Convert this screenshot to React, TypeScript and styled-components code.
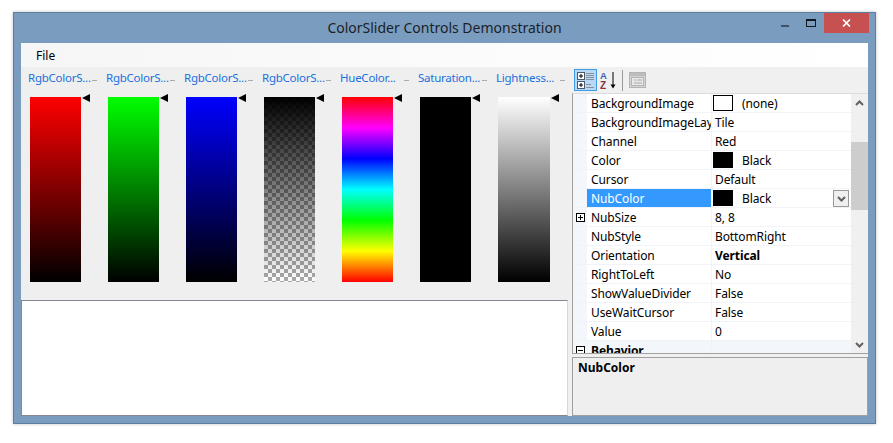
import styled, { createGlobalStyle } from "styled-components";

const GlobalStyle = createGlobalStyle`
  html, body {
    margin: 0;
    padding: 0;
    background: #fff;
    overflow: hidden;
  }
  * { box-sizing: border-box; }
`;

const Page = styled.div`
  width: 893px;
  height: 443px;
  padding: 12px 0 0 13px;
  font-family: "Noto Sans", "Liberation Sans", sans-serif;
  font-size: 12px;
  color: #000;
`;

const Window = styled.div`
  width: 863px;
  height: 412px;
  background: #7a9cbf;
  border: 1px solid #5d7f9f;
  box-shadow: 0 0 3px rgba(0, 0, 0, 0.25);
  padding: 0 7px 7px 7px;
  display: flex;
  flex-direction: column;
`;

const TitleBar = styled.div`
  height: 30px;
  flex: none;
  display: grid;
  grid-template-columns: 1fr auto 1fr;
`;

const Title = styled.div`
  font-size: 14px;
  line-height: 30px;
  color: #1a1f26;
  grid-column: 2;
`;

const Caption = styled.div`
  grid-column: 3;
  justify-self: end;
  display: flex;
  align-items: flex-start;
  margin-right: -1px;
`;

const CaptionButton = styled.div<{ $w: number; $close?: boolean }>`
  width: ${(p) => p.$w}px;
  height: 20px;
  display: flex;
  align-items: center;
  justify-content: center;
  background: ${(p) => (p.$close ? "#c75050" : "transparent")};
`;

const Client = styled.div`
  flex: 1;
  min-height: 0;
  display: flex;
  flex-direction: column;
  background: #f0f0f0;
`;

const MenuBar = styled.div`
  height: 24px;
  flex: none;
  background: linear-gradient(to right, #f6f6f6 0%, #fbfbfb 50%, #ffffff 100%);
  padding-left: 15px;
  line-height: 26px;
`;

const Body = styled.div`
  flex: 1;
  min-height: 0;
  display: grid;
  grid-template-columns: 547px 296px;
  column-gap: 4px;
`;

const LeftColumn = styled.div`
  display: flex;
  flex-direction: column;
  min-height: 0;
`;

const SliderPanel = styled.div`
  height: 233px;
  flex: none;
  background: #efefef;
  display: flex;
  padding: 4px 0 0 7px;
`;

const SliderCell = styled.div`
  width: 78px;
  flex: none;
  display: flex;
  flex-direction: column;
`;

const SliderLabel = styled.div`
  height: 26px;
  color: #1a70dc;
  font-size: 11.5px;
  letter-spacing: -0.25px;
  line-height: 14px;
  white-space: nowrap;
  position: relative;
  width: 70px;

  &::after {
    content: "";
    position: absolute;
    left: 64px;
    top: 9px;
    width: 5px;
    height: 1px;
    background: #aaa;
  }
`;

const SliderTrack = styled.div<{ $w?: number }>`
  position: relative;
  margin-left: 2px;
  width: ${(p) => p.$w ?? 51}px;
  height: 185px;
`;

const SliderFill = styled.div<{ $bg: string; $checker?: boolean }>`
  width: 100%;
  height: 100%;
  background: ${(p) => p.$bg}${(p) =>
    p.$checker ? ", repeating-conic-gradient(#ffffff 0% 25%, #a9a9a9 0% 50%) 0 0 / 8px 8px" : ""};
`;

const Nub = styled.svg`
  position: absolute;
  left: calc(100% + 1px);
  top: -3px;
  width: 8px;
  height: 8px;
`;

const OutputBox = styled.div`
  flex: 1;
  background: #fff;
  border-top: 1px solid #828790;
  border-left: 1px solid #828790;
  border-bottom: 1px solid #828790;
  border-right: 1px solid #d8d8d8;
`;

const RightColumn = styled.div`
  display: flex;
  flex-direction: column;
  min-height: 0;
`;

const Toolbar = styled.div`
  height: 26px;
  flex: none;
  display: flex;
  align-items: center;
  padding: 0 0 0 2px;
`;

const ToolButton = styled.div<{ $active?: boolean }>`
  width: 23px;
  height: 22px;
  display: flex;
  align-items: center;
  justify-content: center;
  background: ${(p) => (p.$active ? "#b8d8f5" : "transparent")};
  border: 1px solid ${(p) => (p.$active ? "#3d9be8" : "transparent")};
`;

const ToolSeparator = styled.div`
  width: 1px;
  height: 21px;
  margin: 0 3px 0 2px;
  background: #9a9a9a;
`;

const GridFrame = styled.div`
  height: 261px;
  flex: none;
  display: flex;
  overflow: hidden;
  background: #fff;
  border: 1px solid #a0a0a0;
  border-top-color: #dcdcdc;
  border-right: none;
`;

const GridRows = styled.div`
  flex: 1;
  min-width: 0;
`;

const Row = styled.div`
  height: 19px;
  display: flex;
  border-bottom: 1px solid #f0f4f9;
  line-height: 20px;
  letter-spacing: -0.1px;
`;

const Gutter = styled.div`
  width: 14px;
  flex: none;
  background: #f3f6fb;
  display: flex;
  align-items: center;
  justify-content: center;
`;

const NameCell = styled.div<{ $selected?: boolean; $section?: boolean }>`
  width: 124px;
  flex: none;
  padding-left: 4px;
  overflow: hidden;
  white-space: nowrap;
  background: ${(p) => (p.$selected ? "#3399ff" : p.$section ? "#f3f6fb" : "transparent")};
  color: ${(p) => (p.$selected ? "#fff" : "#000")};
  font-weight: ${(p) => (p.$section ? 700 : 400)};
`;

const ValueCell = styled.div<{ $bold?: boolean; $section?: boolean }>`
  flex: 1;
  min-width: 0;
  display: flex;
  align-items: flex-start;
  padding-left: 3px;
  position: relative;
  border-left: 1px solid #f0f4f9;
  background: ${(p) => (p.$section ? "#f3f6fb" : "transparent")};
  font-weight: ${(p) => (p.$bold ? 700 : 400)};
`;

const Swatch = styled.span<{ $color: string }>`
  width: 20px;
  height: 16px;
  flex: none;
  margin: 1px 9px 0 -2px;
  background: ${(p) => p.$color};
  border: 1px solid #000;
`;

const DropButton = styled.div`
  position: absolute;
  right: 2px;
  top: 1px;
  width: 16px;
  height: 17px;
  background: #efefef;
  border: 1px solid #999;
  display: flex;
  align-items: center;
  justify-content: center;
`;

const ScrollBar = styled.div`
  width: 17px;
  flex: none;
  background: #f0f0f0;
  display: flex;
  flex-direction: column;
  align-items: center;
`;

const ScrollArrow = styled.div`
  height: 17px;
  flex: none;
  display: flex;
  align-items: center;
  justify-content: center;
`;

const ScrollSpace = styled.div<{ $h?: number; $thumb?: boolean }>`
  width: 100%;
  height: ${(p) => (p.$h ? `${p.$h}px` : "auto")};
  flex: ${(p) => (p.$h ? "none" : 1)};
  background: ${(p) => (p.$thumb ? "#cdcdcd" : "transparent")};
`;

const Gap = styled.div`
  height: 3px;
  flex: none;
`;

const HelpPane = styled.div`
  flex: 1;
  background: #efefef;
  border: 1px solid #a0a0a0;
  padding: 2px 5px;
  font-weight: 700;
  line-height: 16px;
`;

const Expander = ({ open }: { open?: boolean }) => (
  <svg width="9" height="9" viewBox="0 0 9 9">
    <rect x="0.5" y="0.5" width="8" height="8" fill="#fff" stroke="#000" />
    <path d="M2 4.5h5" stroke="#000" />
    {!open && <path d="M4.5 2v5" stroke="#000" />}
  </svg>
);

const Chevron = ({ up }: { up?: boolean }) => (
  <svg width="9" height="6" viewBox="0 0 9 6">
    <path d={up ? "M1 5l3.5-3.5L8 5" : "M1 1l3.5 3.5L8 1"} fill="none" stroke="#606060" strokeWidth="2" />
  </svg>
);

const CategorizedIcon = () => (
  <svg width="18" height="17" viewBox="0 0 18 17">
    <rect x="0.5" y="0.5" width="7" height="7" fill="#fff" stroke="#4a5a70" />
    <path d="M2 4h4M4 2v4" stroke="#000" />
    <rect x="0.5" y="9.5" width="7" height="7" fill="#fff" stroke="#4a5a70" />
    <path d="M2 13h4M4 11v4" stroke="#000" />
    <path d="M9 1.5h8M9 3.5h8M9 5.5h8M9 7.5h8M9 12.5h5M9 15.5h8" stroke="#8a9098" />
  </svg>
);

const SortIcon = () => (
  <svg width="18" height="19" viewBox="0 0 18 19">
    <text x="0" y="8" fontFamily="Liberation Sans" fontSize="9.5" fontWeight="700" fill="#3b5fb0">A</text>
    <text x="0" y="18" fontFamily="Liberation Sans" fontSize="10" fontWeight="700" fill="#8a3040">Z</text>
    <path d="M13 1v14" stroke="#000" />
    <path d="M10.5 13.5h5l-2.5 4z" fill="#000" />
  </svg>
);

const PagesIcon = () => (
  <svg width="17" height="16" viewBox="0 0 17 16">
    <rect x="0.5" y="0.5" width="16" height="15" fill="#d4d4d4" stroke="#b4b4b4" />
    <rect x="1" y="1" width="15" height="3" fill="#bcbcbc" />
    <rect x="2.5" y="5.5" width="12" height="8" fill="#e8e8e8" stroke="#b4b4b4" />
    <path d="M5 8h2M8 8h5M5 11h8" stroke="#a8a8a8" />
  </svg>
);

const NubMark = () => (
  <Nub viewBox="0 0 8 8">
    <path d="M0 4L8 0v8z" fill="#000" />
  </Nub>
);

const sliders = [
  { label: "RgbColorS...", bg: "linear-gradient(#ff0000, #000000)" },
  { label: "RgbColorS...", bg: "linear-gradient(#00ff00, #000000)" },
  { label: "RgbColorS...", bg: "linear-gradient(#0000ff, #000000)" },
  { label: "RgbColorS...", bg: "linear-gradient(#000000, rgba(0,0,0,0))", checker: true },
  {
    label: "HueColor...",
    bg: "linear-gradient(#ff0000, #ff00ff 16.66%, #0000ff 33.33%, #00ffff 50%, #00ff00 66.66%, #ffff00 83.33%, #ff0000)",
  },
  { label: "Saturation...", bg: "#000000" },
  { label: "Lightness...", bg: "linear-gradient(#ffffff, #000000)", w: 52 },
];

type Prop = { name: string; value: string; swatch?: string; bold?: boolean; expand?: boolean; selected?: boolean };

const props: Prop[] = [
  { name: "BackgroundImage", value: "(none)", swatch: "#ffffff" },
  { name: "BackgroundImageLayout", value: "Tile" },
  { name: "Channel", value: "Red" },
  { name: "Color", value: "Black", swatch: "#000000" },
  { name: "Cursor", value: "Default" },
  { name: "NubColor", value: "Black", swatch: "#000000", selected: true },
  { name: "NubSize", value: "8, 8", expand: true },
  { name: "NubStyle", value: "BottomRight" },
  { name: "Orientation", value: "Vertical", bold: true },
  { name: "RightToLeft", value: "No" },
  { name: "ShowValueDivider", value: "False" },
  { name: "UseWaitCursor", value: "False" },
  { name: "Value", value: "0" },
];

export default function App() {
  return (
    <>
      <GlobalStyle />
      <Page>
        <Window>
          <TitleBar>
            <Title>ColorSlider Controls Demonstration</Title>
            <Caption>
              <CaptionButton $w={26}>
                <svg width="8" height="8" viewBox="0 0 8 8">
                  <rect width="8" height="2" y="6" fill="#3f5368" />
                </svg>
              </CaptionButton>
              <CaptionButton $w={26}>
                <svg width="10" height="8" viewBox="0 0 10 8">
                  <rect x="0.5" y="0.5" width="9" height="7" fill="none" stroke="#0f1720" />
                  <rect x="0" y="0" width="10" height="2" fill="#0f1720" />
                </svg>
              </CaptionButton>
              <CaptionButton $w={45} $close>
                <svg width="9" height="8" viewBox="0 0 9 8">
                  <path d="M1 0.5l7 7M8 0.5l-7 7" stroke="#fff" strokeWidth="1.7" />
                </svg>
              </CaptionButton>
            </Caption>
          </TitleBar>
          <Client>
            <MenuBar>File</MenuBar>
            <Body>
              <LeftColumn>
                <SliderPanel>
                  {sliders.map((s, i) => (
                    <SliderCell key={i}>
                      <SliderLabel>{s.label}</SliderLabel>
                      <SliderTrack $w={s.w}>
                        <SliderFill $bg={s.bg} $checker={s.checker} />
                        <NubMark />
                      </SliderTrack>
                    </SliderCell>
                  ))}
                </SliderPanel>
                <OutputBox />
              </LeftColumn>
              <RightColumn>
                <Toolbar>
                  <ToolButton $active>
                    <CategorizedIcon />
                  </ToolButton>
                  <ToolButton>
                    <SortIcon />
                  </ToolButton>
                  <ToolSeparator />
                  <ToolButton>
                    <PagesIcon />
                  </ToolButton>
                </Toolbar>
                <GridFrame>
                  <GridRows>
                    {props.map((p) => (
                      <Row key={p.name}>
                        <Gutter>{p.expand && <Expander />}</Gutter>
                        <NameCell $selected={p.selected}>{p.name}</NameCell>
                        <ValueCell $bold={p.bold}>
                          {p.swatch && <Swatch $color={p.swatch} />}
                          {p.value}
                          {p.selected && (
                            <DropButton>
                              <Chevron />
                            </DropButton>
                          )}
                        </ValueCell>
                      </Row>
                    ))}
                    <Row>
                      <Gutter>
                        <Expander open />
                      </Gutter>
                      <NameCell $section>Behavior</NameCell>
                      <ValueCell $section />
                    </Row>
                  </GridRows>
                  <ScrollBar>
                    <ScrollArrow>
                      <Chevron up />
                    </ScrollArrow>
                    <ScrollSpace $h={31} />
                    <ScrollSpace $h={68} $thumb />
                    <ScrollSpace />
                    <ScrollArrow>
                      <Chevron />
                    </ScrollArrow>
                  </ScrollBar>
                </GridFrame>
                <Gap />
                <HelpPane>NubColor</HelpPane>
              </RightColumn>
            </Body>
          </Client>
        </Window>
      </Page>
    </>
  );
}
